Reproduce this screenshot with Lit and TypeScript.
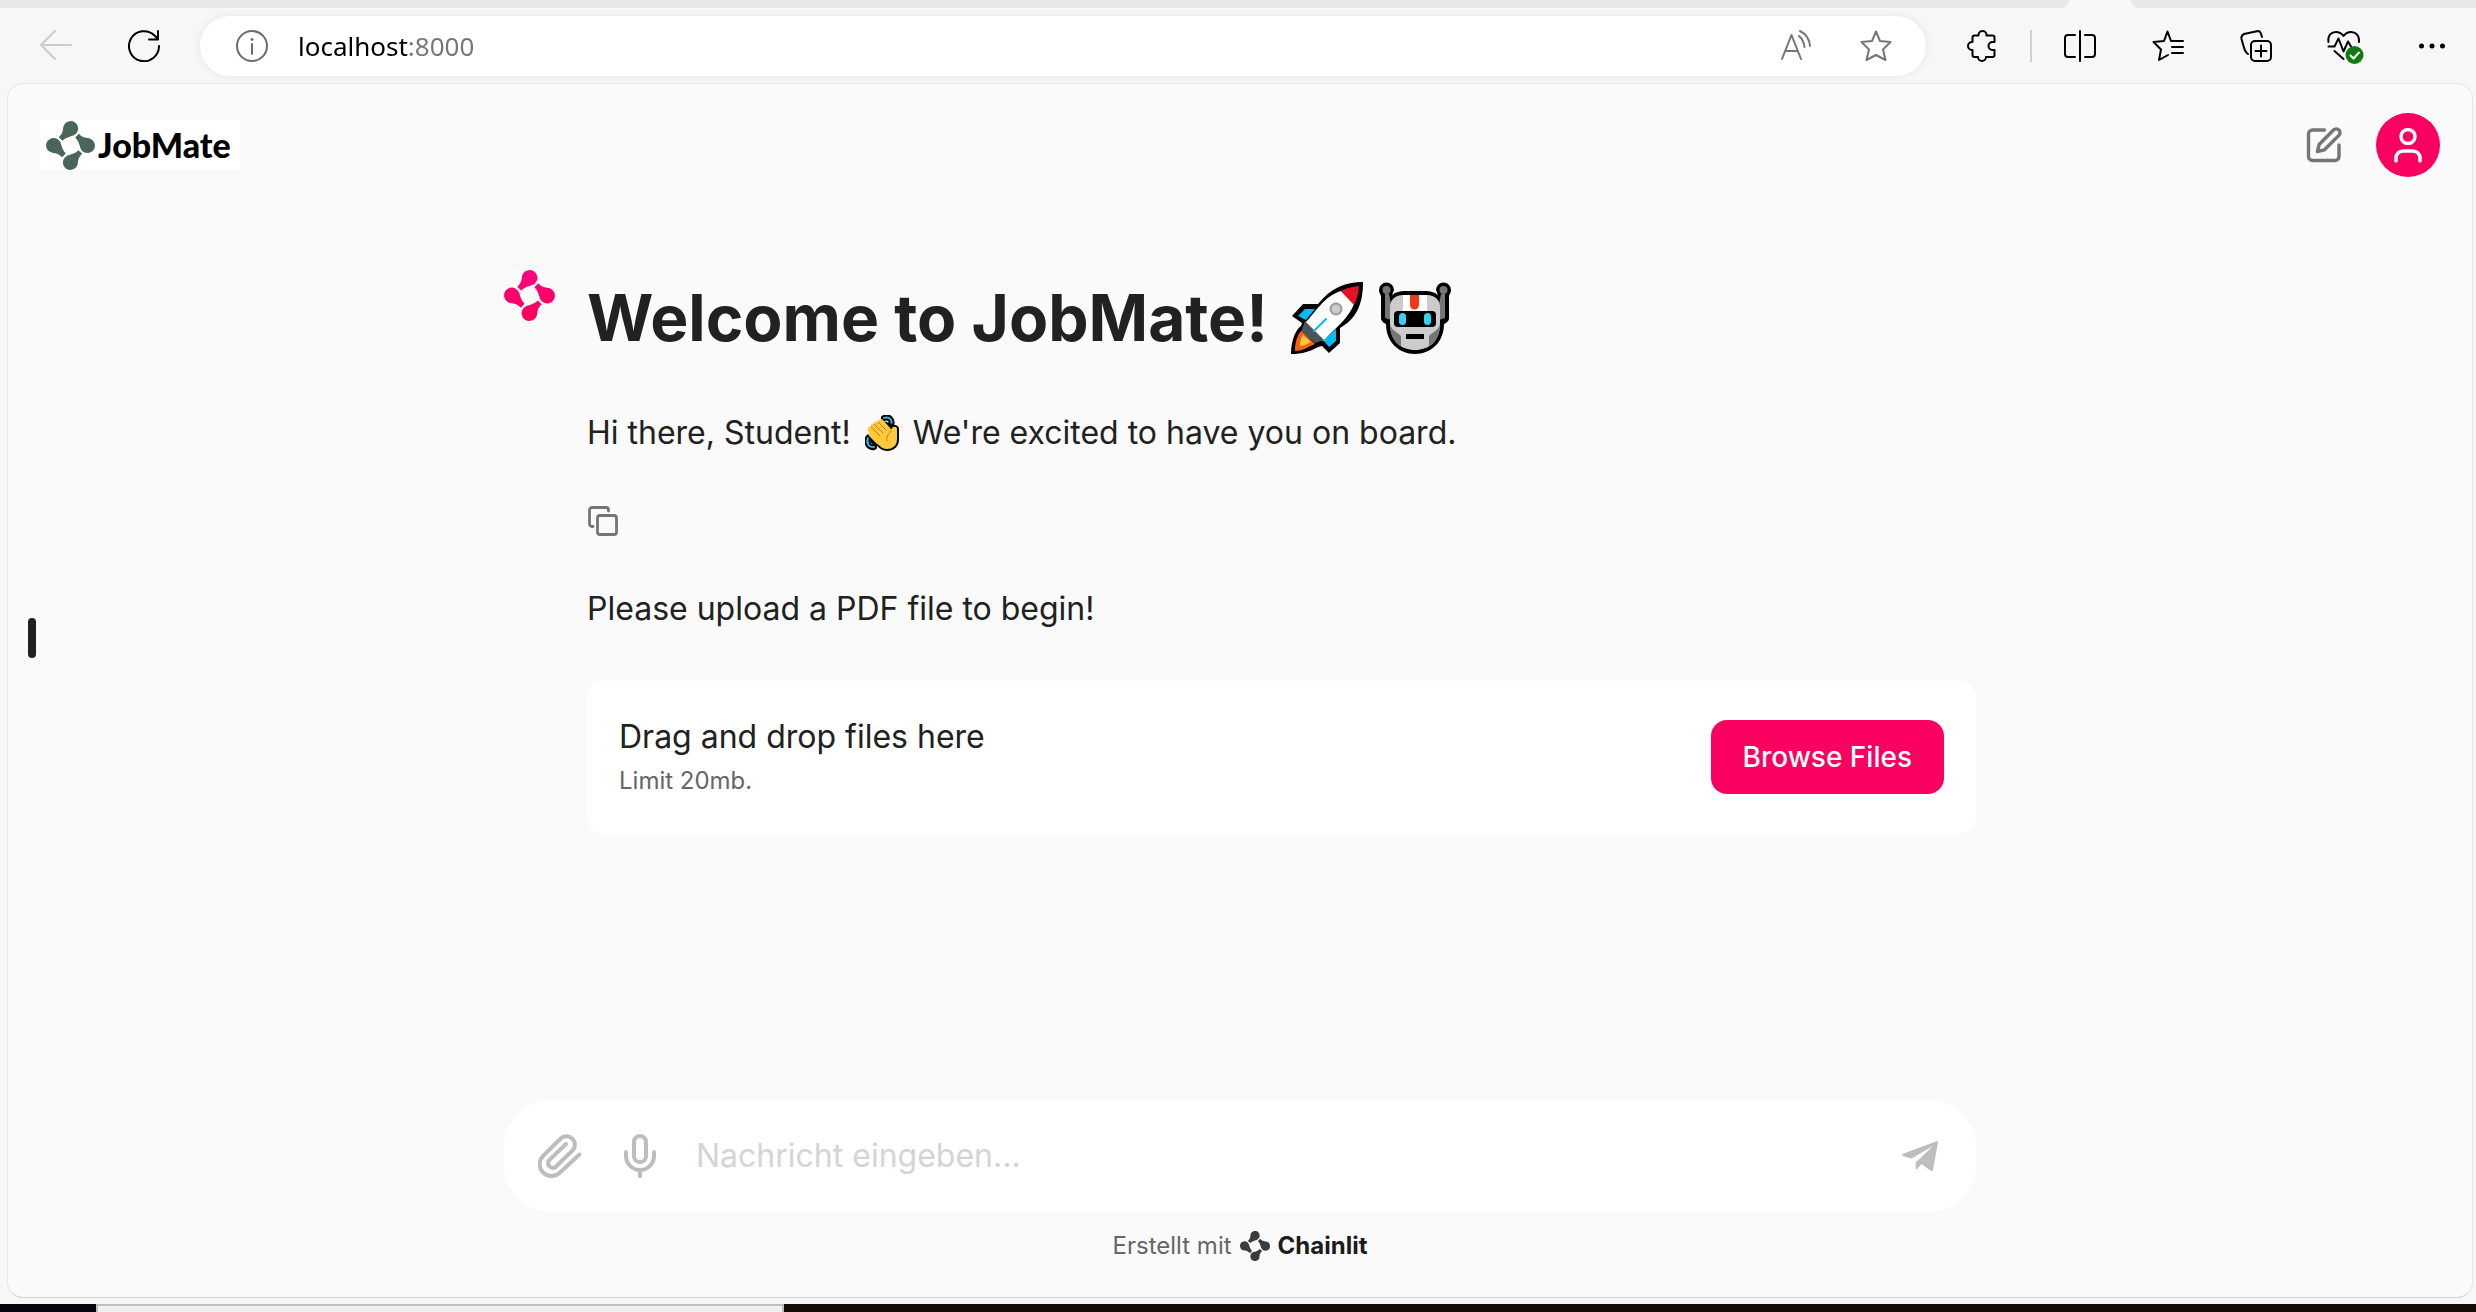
import { LitElement, html, css, svg } from "lit";
import { customElement, property } from "lit/decorators.js";

const DROP = "M17.8 8A7.8 7.8 0 1 1 28.5 15.1C24 16.5 20.5 17.2 17.2 20.6L13.3 16.8C16.6 13.6 17.2 11.8 17.8 8Z";

const icon = (w: number, h: number, body: unknown) => html`<svg
  width=${w} height=${h} viewBox="0 0 ${w} ${h}" fill="none" stroke="currentColor"
  stroke-width="2" stroke-linecap="round" stroke-linejoin="round" aria-hidden="true">${body}</svg>`;

const backIcon = icon(32, 32, svg`<path d="M31 15H1M15 1L1 15l14 14"/>`);
const reloadIcon = icon(32, 32, svg`<path d="M31 16A15 15 0 1 1 26.500 5.500L30 9M30 1v8.500h-9"/>`);
const infoIcon = icon(32, 32, svg`<circle cx="16" cy="16" r="15"/><path d="M16 14v10"/><circle cx="16" cy="9.500" r="1" fill="currentColor" stroke-width="1"/>`);
const readIcon = icon(32, 32, svg`<path d="M2 29L11.500 5 21 29M5 21h13M19 6c3 2.500 5 6 5.500 11M20 1c6 3 9.500 8.500 10 15"/>`);
const starIcon = icon(32, 32, svg`<path d="M16 1.500l4 9.500 10.500 1-7.500 7.500 2.500 10.500L16 25l-9.500 5L9 19.500 1.500 12 12 11z"/>`);
const puzzleIcon = icon(32, 32, svg`<path d="M12.500 5.500V5a4 4 0 0 1 8 0v.5H26.500a2 2 0 0 1 2 2V12h-2a4 4 0 0 0 0 8h2v5a2 2 0 0 1-2 2H20a4 4 0 0 1-8 0H8.500a2 2 0 0 1-2-2V20H6a4 4 0 0 1 0-8h.5V7.500a2 2 0 0 1 2-2z"/>`);
const splitIcon = icon(32, 32, svg`<path d="M16 1v30M11 5H4a3 3 0 0 0-3 3v16a3 3 0 0 0 3 3h7M21 5h7a3 3 0 0 1 3 3v16a3 3 0 0 1-3 3h-7"/>`);
const favIcon = icon(32, 32, svg`<path d="M19 11l-3.500-9.500L12 11 1.500 12 9 19.500 7 30l9-5M20 11h11M20 17h11M20 23h11"/>`);
const collectIcon = icon(32, 32, svg`<rect x="11" y="11" width="20" height="20" rx="4"/><path d="M21 15.500v11M15.500 21h11M8 24C5 22 4.500 20 1.500 9 1 6 2 5 4 4L18 1c3 0 3 3 4 6"/>`);
const heartIcon = icon(40, 36, svg`<g transform="translate(3.500 1)"><path d="M1 13C0 6 4 3 8.500 3c4 0 6 2 7.500 4 1.500-2 4-4 7.500-4C28 3 32 6 31.500 13M1 17.500h6l4-8 5 13 4.500-10 3 5M7 22l9 8"/><circle cx="27" cy="26" r="9" fill="#107c10" stroke="none"/><path d="M23 26.500l3 3 5.500-6" stroke="#fff"/></g>`);
const moreIcon = icon(32, 32, svg`<g fill="currentColor" stroke="none"><circle cx="5.500" cy="16" r="2.500"/><circle cx="16" cy="16" r="2.500"/><circle cx="26.500" cy="16" r="2.500"/></g>`);

const editIcon = icon(36, 36, svg`<g stroke-width="3.400"><path d="M18.500 3H6.500a4 4 0 0 0-4 4v22.500a4 4 0 0 0 4 4H29a4 4 0 0 0 4-4V18"/><path d="M11.500 24.500l1.600-7L27.500 3a3.800 3.800 0 0 1 5.400 5.400L18.500 22.800z"/></g>`);
const userIcon = icon(28, 36, svg`<g stroke-width="3.500"><circle cx="14" cy="9.500" r="7"/><path d="M2 34v-3a7 7 0 0 1 7-7h10a7 7 0 0 1 7 7v3"/></g>`);
const copyIcon = icon(32, 30, svg`<g stroke-width="2.800" transform="translate(1 0)"><rect x="9.500" y="9.500" width="19" height="19" rx="2.500"/><path d="M5 20.500H4A2.500 2.500 0 0 1 1.500 18V4A2.500 2.500 0 0 1 4 1.500h14A2.500 2.500 0 0 1 20.500 4v1"/></g>`);
const clipIcon = icon(44, 44, svg`<path stroke-width="4" d="M41.500 20.500L22 38.500A11.600 11.600 0 0 1 5 22L22.500 4.800A8.300 8.300 0 0 1 34.500 16.500L17.500 33A4.800 4.800 0 0 1 10.800 26.500L28 10"/>`);
const micIcon = icon(32, 44, svg`<g stroke-width="4"><rect x="10" y="2" width="12" height="26" rx="6"/><path d="M2 18v4a14 14 0 0 0 28 0v-4M16 36v6"/></g>`);
const sendIcon = icon(36, 30, svg`<path fill="currentColor" stroke="none" d="M34.500.2c1-.5 1.700.2 1.500 1.300L31 28.500c-.3 1.500-1.200 1.800-2.200 1.200L19.500 23l-4.500 5c-.6.700-1.300.3-1.300-.6V21.500L31 5 9.500 17.500 1 15c-1.200-.5-1.200-1.500 0-2.200z"/>`);

const rocket = html`<svg class="emoji" width="72" height="73" viewBox="0 0 72 73" role="img" aria-label="🚀">
  <path fill="#000" d="M72 0C72 16 69 35 49 46V61L38 71 31 64C24 65 19 72 0 72 0 60 4 48 10 44L11 41 1 34 12 22H27C40 6 54 0 72 0Z"/>
  <path fill="#00bcf2" d="M7 34L14 27H24L15 38ZM38 65L32 58 45 47V59Z"/>
  <path fill="#fff" d="M50 9L63 22C58 35 48 43 32 59L14 41C24 31 33 14 50 9Z"/>
  <path fill="#e81123" d="M50 9C55 6 61 5 68 4 67 12 66 17 63 23Z"/>
  <path fill="#4a5459" d="M14 39L33 58 24 61 10 50Z"/>
  <path fill="#f7630c" d="M10 49L24 62C18 64 13 69 4 69 4 60 6 54 10 49Z"/>
  <path fill="#ffc83d" d="M12 53L20 60C16 62 13 64 9 64 9 59 10 56 12 53Z"/>
  <path stroke="#00bcf2" stroke-width="2" stroke-linecap="round" d="M23 49L35 37"/>
  <circle cx="45" cy="27" r="5.500" fill="#ccc" stroke="#999" stroke-width="2"/>
</svg>`;

const robot = html`<svg class="emoji" width="72" height="73" viewBox="0 0 72 73" role="img" aria-label="🤖">
  <path fill="#000" d="M0 8A7.500 7.500 0 0 1 15 8L13 13C17 10 21 9 25 9H47C51 9 55 10 59 13L57 8A7.500 7.500 0 0 1 72 8C72 11 70 13 70 14V37C69 40 67 41 65 42 65 60 52 72 36 72S7 60 7 42C5 41 3 40 2 37V14C1 12 0 10 0 8Z"/>
  <g fill="#767676"><circle cx="7.500" cy="8" r="4"/><circle cx="64.500" cy="8" r="4"/><path d="M6 12H10L12 22V38L6 36ZM62 12H66V36L60 38V22Z"/></g>
  <path fill="#ccc" d="M11 38V25C11 18 16 13 24 13H48C56 13 61 18 61 25V42C61 59 50 68 36 68S11 59 11 42Z"/>
  <path fill="#767676" d="M11 42C12 48 18 50 22 54V64C14 59 11 52 11 42ZM61 42C60 48 54 50 50 54V64C58 59 61 52 61 42Z"/>
  <path fill="#fff" d="M24 13H48V30H24Z"/>
  <path fill="#f03a17" d="M31 13H40V23A4.500 4.500 0 0 1 31 23Z"/>
  <rect x="15" y="29" width="42" height="16" rx="4" fill="#000"/>
  <rect x="20" y="31" width="7" height="12" rx="3.500" fill="#31d2f7"/><rect x="45" y="31" width="7" height="12" rx="3.500" fill="#31d2f7"/>
  <rect x="27" y="52" width="18" height="5" fill="#000"/>
</svg>`;

const wave = html`<svg class="emoji" width="34" height="36" viewBox="0 0 34 36" role="img" aria-label="👋">
  <path fill="none" stroke="#000" stroke-width="6" stroke-linecap="round" d="M19 3C24 1 28 5 26 10M3 23C1 28 4 33 9 32"/>
  <path fill="none" stroke="#31b9e0" stroke-width="2" stroke-linecap="round" d="M19 3C24 1 28 5 26 10M3 23C1 28 4 33 9 32"/>
  <path fill="#000" d="M15 5L28 9 28 17 15 12ZM2 19L12 22V32L6 28Z"/>
  <path fill="#ffc83d" stroke="#000" stroke-width="2" stroke-linejoin="round" d="M26 14V13C27 10 33 10 33 14V25C33 31 28 35 22 35 17 35 14 32 12 29L4 21"/>
  <path fill="#ffc83d" d="M3 14C3 12 5 11 6 12 5 10 7 8 9 9 9 6 12 6 13 7 14 3 17 4 18 5L26 14 30 24 20 33 12 29 4 21C3 20 3 18 5 18L3 16Z"/>
  <path fill="none" stroke="#d67d00" stroke-width="1" stroke-linecap="round" d="M6 12l9 9M9 9l9 9M13 7l8 8M26 15c0 4-6 5-4 11"/>
</svg>`;

@customElement("chain-mark")
export class ChainMark extends LitElement {
  @property({ type: Number }) size = 51;
  @property() from = "currentColor";
  @property() to = "currentColor";

  static styles = css`
    :host { display: inline-flex; flex: none; }
  `;

  render() {
    return html`<svg width=${this.size} height=${this.size} viewBox="0 0 51 51" aria-hidden="true">
      <defs>
        <linearGradient id="tone" gradientUnits="userSpaceOnUse" x1="0" y1="0" x2="0" y2="51">
          <stop offset="0" stop-color=${this.from}></stop>
          <stop offset="1" stop-color=${this.to}></stop>
        </linearGradient>
        <clipPath id="drop"><path d=${DROP}></path></clipPath>
      </defs>
      ${[0, 90, 180, 270].map(
        (a) => svg`<g clip-path="url(#drop)" transform="rotate(${a} 25.5 25.5)"><rect width="51" height="51" transform="rotate(${-a} 25.5 25.5)" fill="url(#tone)"/></g>`
      )}
    </svg>`;
  }
}

@customElement("browser-bar")
export class BrowserBar extends LitElement {
  static styles = css`
    :host { display: block; flex: none; background: #f7f7f7; }
    .tabs { display: flex; height: 8px; }
    .tab-rest { background: #e8e8e8; }
    .tab-before { flex: 1; border-bottom-right-radius: 8px; }
    .tab-after { width: 345px; border-bottom-left-radius: 8px; }
    .tab-active { width: 62px; }
    .bar { display: flex; align-items: center; height: 75px; padding-left: 12px; }
    button {
      display: flex; align-items: center; justify-content: center; flex: none;
      width: 88px; height: 60px; padding: 0; border: 0; background: none; color: #000;
    }
    .dim { color: #ccc; }
    .address {
      display: flex; align-items: center; flex: 1; min-width: 0; height: 60px;
      margin: 0 12px; padding: 0 10px 0 36px; box-sizing: border-box;
      border-radius: 30px; background: #fff; color: #6b6b6b;
      box-shadow: 0 0 8px rgba(0, 0, 0, 0.08);
    }
    .address button { width: 80px; color: #767676; }
    .url {
      flex: 1; min-width: 0; margin-left: 30px; padding: 0; border: 0; outline: 0;
      font: 26px/40px "Noto Sans", sans-serif;
      background: linear-gradient(90deg, #000 110px, #767676 110px);
      -webkit-background-clip: text; background-clip: text;
      -webkit-text-fill-color: transparent;
    }
    .rule { width: 2px; height: 32px; margin: 0 4px; background: #d0d0d0; }
  `;

  render() {
    return html`
      <div class="tabs">
        <div class="tab-rest tab-before"></div>
        <div class="tab-active"></div>
        <div class="tab-rest tab-after"></div>
      </div>
      <nav class="bar" aria-label="Browser">
        <button class="dim" aria-label="Back">${backIcon}</button>
        <button aria-label="Reload">${reloadIcon}</button>
        <div class="address">
          ${infoIcon}
          <input class="url" type="text" aria-label="Address" value="localhost:8000" />
          <button aria-label="Read aloud">${readIcon}</button>
          <button aria-label="Add to favorites">${starIcon}</button>
        </div>
        <button aria-label="Extensions">${puzzleIcon}</button>
        <div class="rule"></div>
        <button aria-label="Split screen">${splitIcon}</button>
        <button aria-label="Favorites">${favIcon}</button>
        <button aria-label="Collections">${collectIcon}</button>
        <button aria-label="Browser essentials">${heartIcon}</button>
        <button aria-label="More">${moreIcon}</button>
      </nav>
    `;
  }
}

@customElement("app-root")
export class AppRoot extends LitElement {
  static styles = css`
    :host {
      display: flex; flex-direction: column; min-height: 100vh; background: #f7f7f7;
      font: 32px/48px Inter, sans-serif; color: #212121;
    }
    button { padding: 0; border: 0; background: none; font: inherit; color: inherit; }
    svg { display: block; flex: none; }
    .page {
      position: relative; display: flex; flex-direction: column; flex: 1;
      margin: 0 3px 6px 7px; border: 1px solid #e6e6e6; border-bottom-color: #d4d4d4;
      border-radius: 16px; background: #fafafa;
    }
    .top { display: flex; align-items: center; justify-content: space-between; padding: 29px 32px; }
    .brand {
      display: flex; align-items: center; gap: 3px; height: 50px; padding: 0 9px 0 6px;
      background: #fff; color: #4a6659;
    }
    .brand-name { font: 900 34px/48px Lato, sans-serif; color: #000; }
    .actions { display: flex; align-items: center; gap: 34px; }
    .edit { color: #757575; }
    .user {
      display: flex; align-items: center; justify-content: center;
      width: 64px; height: 64px; border-radius: 50%; background: #fa0060; color: #fff;
    }
    .handle {
      position: absolute; left: 20px; top: 44%; width: 8px; height: 40px;
      border-radius: 4px; background: #212121;
    }
    .column {
      display: flex; flex-direction: column; flex: 1;
      width: 100%; max-width: 1472px; margin: 0 auto; padding-top: 64px; box-sizing: border-box;
    }
    .message { display: flex; align-items: flex-start; gap: 32px; }
    .body { flex: 1; min-width: 0; padding-top: 10px; }
    h1 {
      display: flex; align-items: center; gap: 16px; margin: 0 0 53px;
      font-size: 64px; line-height: 76px; font-weight: 700;
    }
    h1 .title { margin-right: 7px; }
    p { margin: 0; }
    .hello { display: flex; align-items: center; gap: 14px; }
    .copy { display: block; margin: 49px 0; color: #757575; }
    .drop {
      display: flex; align-items: center; justify-content: space-between;
      margin-top: 48px; padding: 32px; border-radius: 16px; background: #fff;
    }
    .limit { font-size: 24px; line-height: 40px; color: #666; }
    .browse {
      height: 74px; padding: 0 32px; border-radius: 16px; background: #fa0060; color: #fff;
      font-size: 28px; font-weight: 500;
    }
    .composer {
      display: flex; align-items: center; height: 112px; margin-top: auto; padding: 0 16px;
      border-radius: 48px; background: #fff; color: #bdbdbd;
    }
    .composer button { display: flex; align-items: center; justify-content: center; width: 80px; height: 80px; }
    .composer input {
      flex: 1; min-width: 0; padding: 0 16px; border: 0; outline: 0; background: none;
      font: inherit; color: #212121;
    }
    .composer input::placeholder { color: #d4d4d4; opacity: 1; }
    .credit {
      display: flex; align-items: center; justify-content: center; gap: 8px;
      padding: 19px 0 36px; font-size: 24px; line-height: 30px; color: #666; text-decoration: none;
    }
    .credit-mark { color: #3c3c3c; }
    .credit-name { font-weight: 700; color: #1c1c1c; }
    .desk { display: flex; height: 8px; background: #120d09; }
    .desk-left { width: 96px; background: #04080c; }
    .desk-window {
      width: 688px; box-sizing: border-box; border: 2px solid #bfbfbf; border-bottom: 0; background: #f0f0f0;
    }
  `;

  render() {
    return html`
      <browser-bar></browser-bar>
      <div class="page">
        <header class="top">
          <div class="brand">
            <chain-mark .size=${49}></chain-mark>
            <span class="brand-name">JobMate</span>
          </div>
          <div class="actions">
            <button class="edit" aria-label="New chat">${editIcon}</button>
            <button class="user" aria-label="Account">${userIcon}</button>
          </div>
        </header>
        <button class="handle" aria-label="Open sidebar"></button>
        <main class="column">
          <section class="message">
            <chain-mark .size=${51} .from=${"#ff0080"} .to=${"#ff0057"}></chain-mark>
            <div class="body">
              <h1><span class="title">Welcome to JobMate!</span>${rocket}${robot}</h1>
              <p class="hello"><span>Hi there, Student!</span>${wave}<span>We're excited to have you on board.</span></p>
              <button class="copy" aria-label="Copy">${copyIcon}</button>
              <p>Please upload a PDF file to begin!</p>
              <div class="drop">
                <div>
                  <p>Drag and drop files here</p>
                  <p class="limit">Limit 20mb.</p>
                </div>
                <button class="browse">Browse Files</button>
              </div>
            </div>
          </section>
          <form class="composer" @submit=${(e: Event) => e.preventDefault()}>
            <button type="button" aria-label="Attach file">${clipIcon}</button>
            <button type="button" aria-label="Record">${micIcon}</button>
            <input type="text" aria-label="Nachricht" placeholder="Nachricht eingeben..." />
            <button aria-label="Send">${sendIcon}</button>
          </form>
          <a class="credit" href="#">
            <span>Erstellt mit</span>
            <chain-mark class="credit-mark" .size=${30}></chain-mark>
            <span class="credit-name">Chainlit</span>
          </a>
        </main>
      </div>
      <div class="desk"><div class="desk-left"></div><div class="desk-window"></div></div>
    `;
  }
}
